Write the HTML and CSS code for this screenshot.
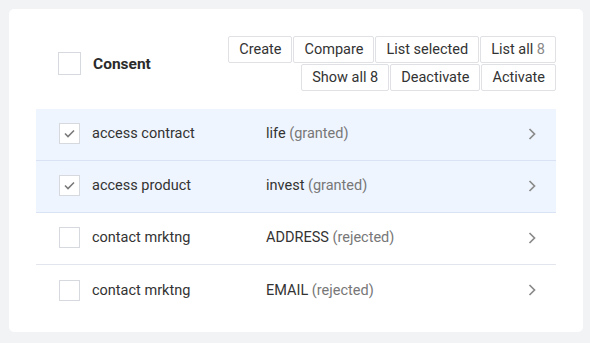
FILE: index.html
```html
<!DOCTYPE html>
<html lang="en">
<head>
    <meta charset="UTF-8">
    <title>Consent</title>
    <link rel="stylesheet" href="styles.css">
</head>
<body>
    <div class="card">
        <div class="header">
            <div class="title">
                <span class="box big"></span>
                <strong>Consent</strong>
            </div>
            <div class="actions">
                <div class="btn-row">
                    <button>Create</button>
                    <button>Compare</button>
                    <button>List selected</button>
                    <button>List all <span class="count">8</span></button>
                </div>
                <div class="btn-row">
                    <button>Show all 8</button>
                    <button>Deactivate</button>
                    <button>Activate</button>
                </div>
            </div>
        </div>

        <ul class="list">
            <li class="row selected">
                <span class="box"><svg width="11" height="9" viewBox="0 0 11 9"><path d="M1 4.5 L4 7.5 L10 1.5" fill="none" stroke="#7a7a7a" stroke-width="1.6"/></svg></span>
                <span class="name">access contract</span>
                <span class="value">life <span class="state">(granted)</span></span>
                <span class="chev"><svg width="8" height="12" viewBox="0 0 8 12"><path d="M1.5 1 L6.5 6 L1.5 11" fill="none" stroke="#8a8a8a" stroke-width="1.7"/></svg></span>
            </li>
            <li class="row selected">
                <span class="box"><svg width="11" height="9" viewBox="0 0 11 9"><path d="M1 4.5 L4 7.5 L10 1.5" fill="none" stroke="#7a7a7a" stroke-width="1.6"/></svg></span>
                <span class="name">access product</span>
                <span class="value">invest <span class="state">(granted)</span></span>
                <span class="chev"><svg width="8" height="12" viewBox="0 0 8 12"><path d="M1.5 1 L6.5 6 L1.5 11" fill="none" stroke="#8a8a8a" stroke-width="1.7"/></svg></span>
            </li>
            <li class="row">
                <span class="box"></span>
                <span class="name">contact mrktng</span>
                <span class="value">ADDRESS <span class="state">(rejected)</span></span>
                <span class="chev"><svg width="8" height="12" viewBox="0 0 8 12"><path d="M1.5 1 L6.5 6 L1.5 11" fill="none" stroke="#8a8a8a" stroke-width="1.7"/></svg></span>
            </li>
            <li class="row">
                <span class="box"></span>
                <span class="name">contact mrktng</span>
                <span class="value">EMAIL <span class="state">(rejected)</span></span>
                <span class="chev"><svg width="8" height="12" viewBox="0 0 8 12"><path d="M1.5 1 L6.5 6 L1.5 11" fill="none" stroke="#8a8a8a" stroke-width="1.7"/></svg></span>
            </li>
        </ul>
    </div>
</body>
</html>
```

FILE: styles.css
```css
body {
    margin: 0;
    padding: 9px;
    background: #f2f3f5;
    font-family: Roboto, "Liberation Sans", sans-serif;
    font-size: 14.5px;
    color: #333;
}
.card {
    width: 574px;
    height: 323px;
    box-sizing: border-box;
    background: white;
    border-radius: 5px;
    padding: 27px 27px 0 27px;
}
.header {
    display: flex;
    justify-content: space-between;
    align-items: center;
    margin-bottom: 18px;
}
.title {
    display: flex;
    align-items: center;
    padding-left: 22px;
}
.title strong {
    font-size: 15.5px;
    margin-left: 12px;
    color: #2b2b2b;
}
.actions {
    display: flex;
    flex-direction: column;
    align-items: flex-end;
    gap: 1px;
}
.btn-row {
    display: flex;
    gap: 1px;
}
button {
    font-family: inherit;
    font-size: 14.5px;
    color: #333;
    background: white;
    border: 1px solid #dfe1e4;
    border-radius: 2px;
    height: 27px;
    padding: 0 10px;
    margin: 0;
}
.count {
    color: #888;
}
.box {
    display: flex;
    align-items: center;
    justify-content: center;
    width: 21px;
    height: 21px;
    box-sizing: border-box;
    border: 1px solid #d6dade;
    background: white;
    flex-shrink: 0;
}
.box.big {
    width: 23px;
    height: 23px;
}
.list {
    list-style: none;
    margin: 0;
    padding: 0;
}
.row {
    display: flex;
    align-items: center;
    height: 52px;
    box-sizing: border-box;
    padding: 0 20px 2px 23px;
    border-bottom: 1px solid #e2e6ec;
}
.row:last-child {
    border-bottom: none;
}
.row.selected {
    background: #eff5fe;
    border-bottom-color: #d9e3f3;
}
.name {
    width: 174px;
    margin-left: 12px;
}
.value {
    flex: 1;
}
.state {
    color: #777;
}
.chev {
    display: flex;
}
```
